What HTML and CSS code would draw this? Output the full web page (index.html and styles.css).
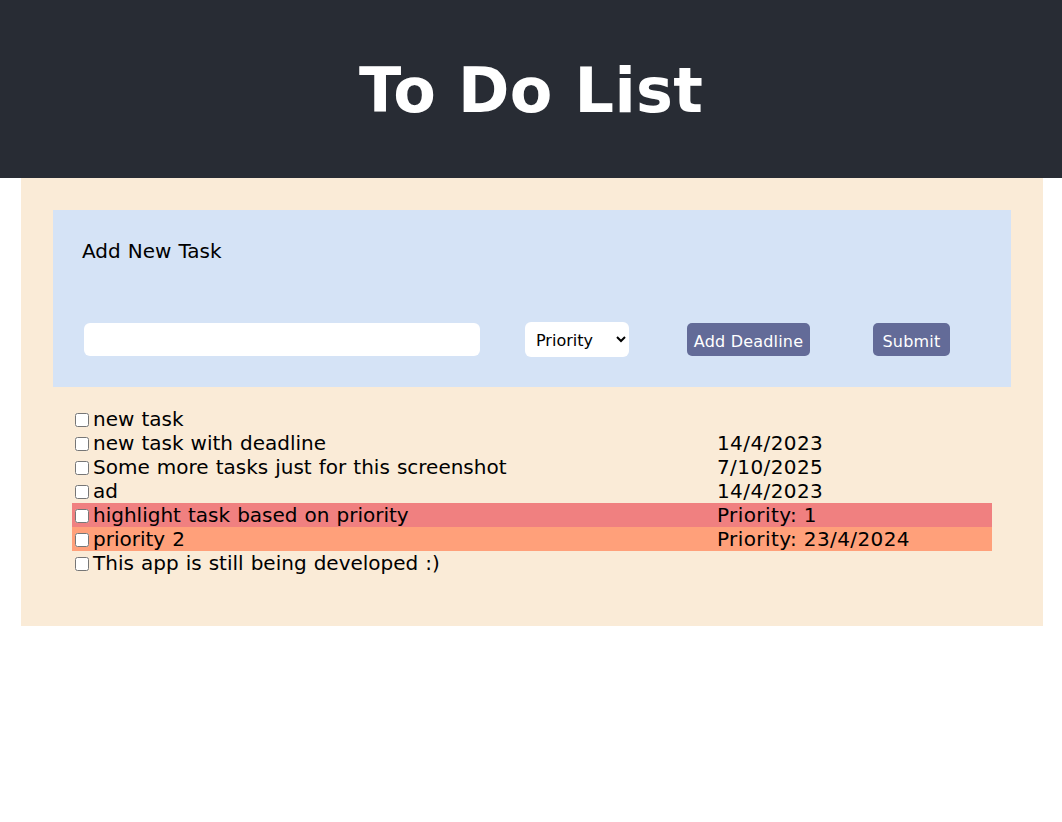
FILE: index.html
```html
<!DOCTYPE html>
<html>
<head>
<meta charset="utf-8">
<title>To Do List</title>
<link rel="stylesheet" href="styles.css">
</head>
<body>
<header class="app-header">
  <h1 class="title">To Do List</h1>
</header>
<main class="board">
  <form class="add-form">
    <div class="form-title">Add New Task</div>
    <div class="form-row">
      <input class="task-input" type="text">
      <select class="priority-select">
        <option>Priority</option>
        <option>1</option>
        <option>2</option>
        <option>3</option>
      </select>
      <button type="button" class="btn btn-deadline">Add Deadline</button>
      <button type="button" class="btn btn-submit">Submit</button>
    </div>
  </form>
  <div class="task-list">
    <div class="task-row">
      <div class="task-name"><input type="checkbox">new task</div>
      <div class="task-meta"></div>
    </div>
    <div class="task-row">
      <div class="task-name"><input type="checkbox">new task with deadline</div>
      <div class="task-meta">14/4/2023</div>
    </div>
    <div class="task-row">
      <div class="task-name"><input type="checkbox">Some more tasks just for this screenshot</div>
      <div class="task-meta">7/10/2025</div>
    </div>
    <div class="task-row">
      <div class="task-name"><input type="checkbox">ad</div>
      <div class="task-meta">14/4/2023</div>
    </div>
    <div class="task-row prio-1">
      <div class="task-name"><input type="checkbox">highlight task based on priority</div>
      <div class="task-meta">Priority: 1</div>
    </div>
    <div class="task-row prio-2">
      <div class="task-name"><input type="checkbox">priority 2</div>
      <div class="task-meta">Priority: 23/4/2024</div>
    </div>
    <div class="task-row">
      <div class="task-name"><input type="checkbox">This app is still being developed :)</div>
      <div class="task-meta"></div>
    </div>
  </div>
</main>
</body>
</html>
```
FILE: styles.css
```css
* { box-sizing: border-box; }

body {
  margin: 0;
  font-family: "DejaVu Sans", Verdana, sans-serif;
  color: #000;
  background: #fff;
}

.app-header {
  height: 178px;
  background: #282c34;
  display: flex;
  align-items: center;
  justify-content: center;
}

.title {
  margin: 4px 0 0;
  color: #fff;
  font-size: 62px;
  font-weight: bold;
  line-height: 72px;
  letter-spacing: 0.3px;
}

.board {
  width: 1022px;
  margin-left: 21px;
  background: #faebd7;
  padding: 32px 32px 51px;
}

.add-form {
  background: #d5e3f6;
  padding: 29px 29px 30px;
  margin: 0;
}

.form-title {
  font-size: 20px;
  line-height: 24px;
  word-spacing: 0.7px;
}

.form-row {
  display: flex;
  align-items: center;
  margin-top: 59px;
  height: 35px;
}

.task-input {
  width: 396px;
  height: 33px;
  margin-left: 2px;
  border: none;
  border-radius: 6px;
  background: #fff;
  font-family: inherit;
  font-size: 16px;
  padding: 0 8px;
}

.priority-select {
  width: 104px;
  height: 35px;
  margin-left: 45px;
  border: none;
  border-radius: 6px;
  background: #fff;
  font-family: inherit;
  font-size: 16px;
  padding: 2px 4px 0 7px;
  color: #000;
}

.btn {
  height: 33px;
  border: none;
  border-radius: 5px;
  background: #636b98;
  color: #fff;
  font-family: inherit;
  font-size: 16px;
  padding: 3px 0 0;
  letter-spacing: 0.2px;
}

.btn-deadline {
  width: 123px;
  margin-left: 58px;
}

.btn-submit {
  width: 77px;
  margin-left: 63px;
}

.task-list {
  width: 920px;
  margin: 20px auto 0;
  font-size: 20px;
  line-height: 24px;
}

.task-row {
  display: grid;
  grid-template-columns: 644px 1fr;
  height: 24px;
}

.task-name {
  white-space: nowrap;
  word-spacing: 0.7px;
}

.task-name input {
  margin: 0 4px 0 3px;
  width: 14px;
  height: 14px;
  vertical-align: -1px;
}

.task-meta {
  padding-left: 1px;
  white-space: nowrap;
  letter-spacing: 0.4px;
}

.prio-1 { background: #f08080; }
.prio-2 { background: #ffa07a; }
```
